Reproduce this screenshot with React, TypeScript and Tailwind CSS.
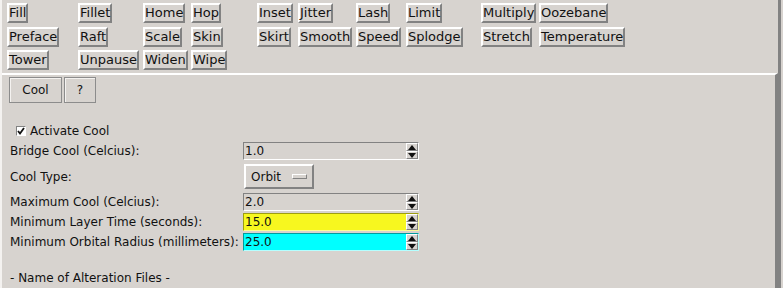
import React from "react";

const toolRows = [
  ["Fill", "Fillet", "Home", "Hop", "Inset", "Jitter", "Lash", "Limit", "Multiply", "Oozebane"],
  ["Preface", "Raft", "Scale", "Skin", "Skirt", "Smooth", "Speed", "Splodge", "Stretch", "Temperature"],
  ["Tower", "Unpause", "Widen", "Wipe"],
];

const fields = [
  { label: "Maximum Cool (Celcius):", value: "2.0", tone: "plain" },
  { label: "Minimum Layer Time (seconds):", value: "15.0", tone: "yellow" },
  { label: "Minimum Orbital Radius (millimeters):", value: "25.0", tone: "cyan" },
];

const toneClass: Record<string, string> = {
  plain: "bg-[#d7d3cf] border-t-[#828282] border-l-[#828282] border-b-white border-r-white",
  yellow: "bg-[#f7f71f] border-t-[#9e9e10] border-l-[#9e9e10] border-b-[#fcfc9a] border-r-[#fcfc9a]",
  cyan: "bg-[#00ffff] border-t-[#009c9c] border-l-[#009c9c] border-b-[#b4ffff] border-r-[#b4ffff]",
};

const ToolButton = ({ label }: { label: string }) => (
  <span className="inline-block h-[20px] border-2 border-t-white border-l-white border-b-[#828282] border-r-[#828282] text-[13px] leading-[16px]">
    {label}
  </span>
);

const Arrow = ({ up }: { up?: boolean }) => (
  <div className="flex h-[8px] w-[12px] items-center justify-center border border-t-white border-l-white border-b-[#828282] border-r-[#828282] bg-[#d7d3cf]">
    <svg width="8" height="5" viewBox="0 0 8 5">
      {up ? <polygon points="0,5 8,5 4,0" fill="#111" /> : <polygon points="0,0 8,0 4,5" fill="#111" />}
    </svg>
  </div>
);

const Spin = ({ value, tone }: { value: string; tone: string }) => (
  <div className={`flex h-[18px] w-[176px] items-stretch border ${toneClass[tone]}`}>
    <span className="flex-1 pl-px leading-[16px]">{value}</span>
    <div className="flex flex-col">
      <Arrow up />
      <Arrow />
    </div>
  </div>
);

export default function App() {
  return (
    <div
      className="flex h-[288px] w-[783px] overflow-hidden bg-[#d7d3cf] text-[12px] text-[#111]"
      style={{ fontFamily: '"DejaVu Sans", Verdana, sans-serif' }}
    >
      <div className="flex w-[781px] flex-col border-l-2 border-r-[3px] border-l-[#f4f2f0] border-r-[#828282]">
        {/* tool buttons */}
        <div className="grid h-[73px] grid-cols-[71px_65px_48px_66px_41px_58px_50px_75px_58px_auto] gap-y-[3.5px] content-start pl-[5px] pt-[3px]">
          {toolRows.map((row, r) =>
            row.map((label, c) => (
              <div key={`${r}-${c}`} style={{ gridRow: r + 1, gridColumn: c + 1 }}>
                <ToolButton label={label} />
              </div>
            ))
          )}
        </div>

        {/* cool panel */}
        <div className="flex-1 border-t-2 border-r-[3px] border-t-white border-r-[#828282]">
          <div className="flex gap-[2px] pl-[7px] pt-[2px]">
            <div className="flex h-[26px] w-[53px] items-center justify-center border border-[#8c8c8c] shadow-[inset_1px_1px_0_#f4f2f0]">
              Cool
            </div>
            <div className="flex h-[26px] w-[32px] items-center justify-center border border-[#8c8c8c] shadow-[inset_1px_1px_0_#f4f2f0]">
              ?
            </div>
          </div>

          <div className="pl-[8px]">
            <div className="mt-[19px] flex h-[18px] items-center pl-[6px]">
              <span className="flex h-[10px] w-[10px] items-center justify-center border border-t-[#828282] border-l-[#828282] border-b-white border-r-white bg-white">
                <svg width="8" height="8" viewBox="0 0 8 8">
                  <path d="M1 4 L3 6.5 L7 1" stroke="#111" strokeWidth="1.8" fill="none" />
                </svg>
              </span>
              <span className="ml-[4px]">Activate Cool</span>
            </div>

            <div className="mt-[2px] grid grid-cols-[233px_auto] items-center">
              <span>Bridge Cool (Celcius):</span>
              <Spin value="1.0" tone="plain" />
            </div>

            <div className="mt-[4px] grid grid-cols-[233px_auto] items-center">
              <span>Cool Type:</span>
              <div className="ml-px flex h-[25px] w-[70px] items-center border-2 border-t-white border-l-white border-b-[#828282] border-r-[#828282] pl-[5px]">
                <span>Orbit</span>
                <span className="ml-[11px] h-[5px] w-[15px] border border-t-white border-l-white border-b-[#828282] border-r-[#828282]" />
              </div>
            </div>

            <div className="mt-[4px] flex flex-col gap-[2px]">
              {fields.map((f) => (
                <div key={f.label} className="grid grid-cols-[233px_auto] items-center">
                  <span className="whitespace-nowrap">{f.label}</span>
                  <Spin value={f.value} tone={f.tone} />
                </div>
              ))}
            </div>

            <div className="mt-[20px] leading-[14px]">- Name of Alteration Files -</div>
          </div>
        </div>
      </div>
    </div>
  );
}
